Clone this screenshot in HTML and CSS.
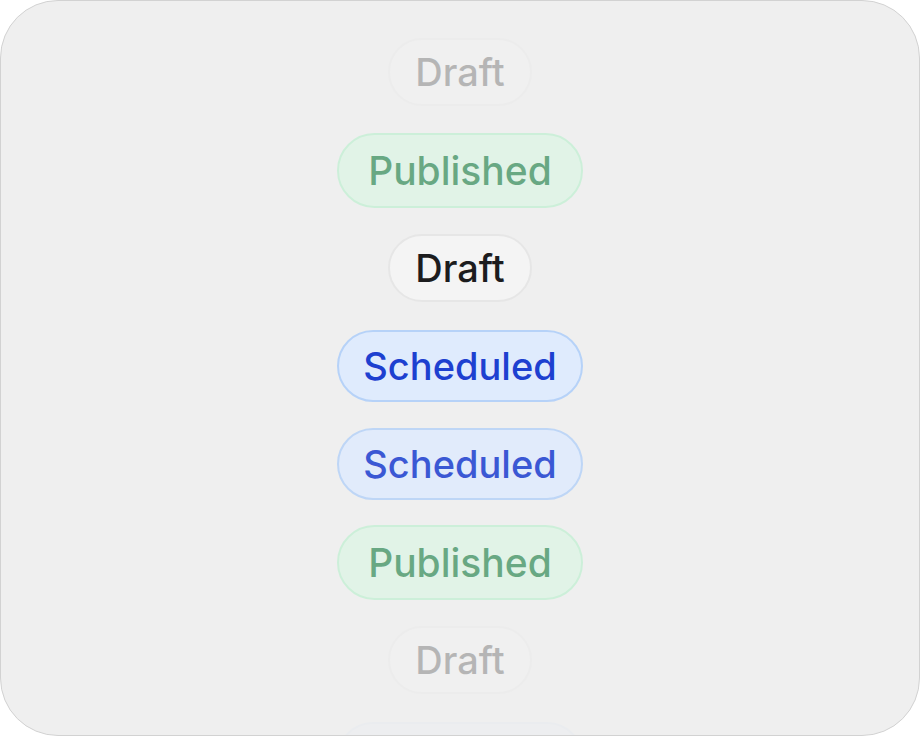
FILE: index.html
```html
<!DOCTYPE html>
<html lang="en">
<head>
<meta charset="utf-8">
<title>Status picker</title>
<link rel="stylesheet" href="styles.css">
</head>
<body>
<div class="frame">
  <ul class="wheel">
    <li class="row"><span class="pill draft o-30">Draft</span></li>
    <li class="row"><span class="pill published o-60">Published</span></li>
    <li class="row"><span class="pill draft">Draft</span></li>
    <li class="row"><span class="pill scheduled">Scheduled</span></li>
    <li class="row"><span class="pill scheduled o-85">Scheduled</span></li>
    <li class="row"><span class="pill published o-60">Published</span></li>
    <li class="row"><span class="pill draft o-30">Draft</span></li>
    <li class="row"><span class="pill scheduled o-08">Scheduled</span></li>
  </ul>
</div>
</body>
</html>
```

FILE: styles.css
```css
* { box-sizing: border-box; }
html, body {
  margin: 0;
  padding: 0;
  background: #ffffff;
}
body {
  width: 920px;
  height: 736px;
  font-family: Inter, "Noto Sans", "Liberation Sans", sans-serif;
}
.frame {
  width: 920px;
  height: 736px;
  border: 1px solid #d2d2d2;
  border-radius: 58px;
  background: #efefef;
  overflow: hidden;
}
.wheel {
  list-style: none;
  margin: 0;
  padding: 22px 0 0;
  display: flex;
  flex-direction: column;
}
.row {
  height: 98px;
  flex: none;
  display: flex;
  align-items: center;
  justify-content: center;
}
.pill {
  display: inline-flex;
  align-items: center;
  justify-content: center;
  border-radius: 999px;
  border: 2px solid transparent;
  font-size: 38px;
  font-weight: 450;
  line-height: 1;
  white-space: nowrap;
}
.draft {
  width: 144px;
  height: 68px;
  background: #f4f4f4;
  border-color: #e6e6e6;
  color: #1c1c1e;
}
.published {
  width: 246px;
  height: 75px;
  font-size: 39px;
  background: #d9f7e3;
  border-color: #b6f0cb;
  color: #0f7a3c;
}
.scheduled {
  width: 246px;
  height: 72px;
  background: #dfebfd;
  border-color: #b6d2f8;
  color: #1d40d0;
}
.o-85 { opacity: 0.86; }
.o-60 { opacity: 0.6; }
.o-30 { opacity: 0.27; }
.o-08 { opacity: 0.08; }
```
